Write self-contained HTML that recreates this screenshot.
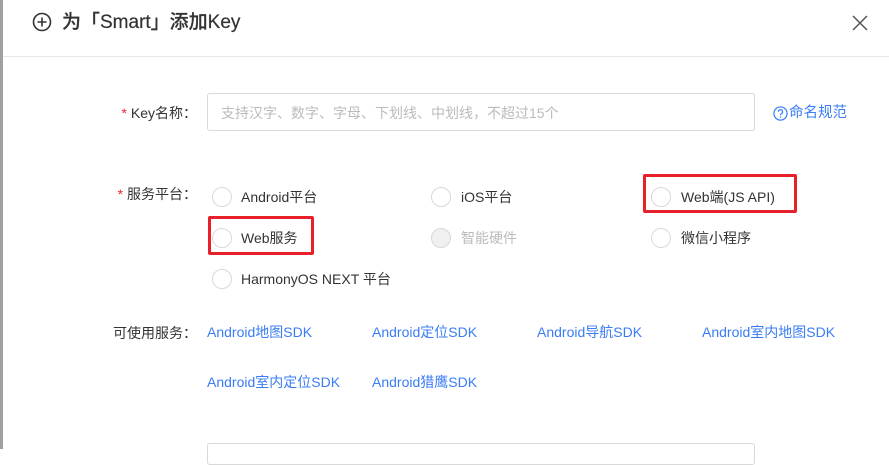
<!DOCTYPE html>
<html><head><meta charset="utf-8"><style>
body{margin:0;width:889px;height:449px;overflow:hidden;background:#fff;position:relative;font-family:"Liberation Sans","Noto Sans CJK SC",sans-serif;color:#333}
.a{position:absolute;white-space:nowrap}
.r{position:absolute;width:18px;height:18px;border:1px solid #d9d9d9;border-radius:50%;background:#fff}
.t{position:absolute;font-size:14px;color:#333;line-height:20px;white-space:nowrap}
.lb{position:absolute;font-size:14px;color:#333;line-height:20px;white-space:nowrap;right:692px;text-align:right}
.l{position:absolute;font-size:14px;color:#3a7cf5;line-height:20px;white-space:nowrap}
.box{position:absolute;border:3px solid #e8202a;border-radius:2px}
</style></head><body>
<div class="a" style="left:0;top:0;width:3px;height:449px;background:#a0a0a0"></div>
<svg class="a" style="left:32px;top:12px" width="20" height="20" viewBox="0 0 20 20"><circle cx="10" cy="10" r="8.5" fill="none" stroke="#333" stroke-width="1.6"/><path d="M10 5.5v9M5.5 10h9" stroke="#333" stroke-width="1.6"/></svg>
<div class="a" style="left:62px;top:10px;font-size:19px;line-height:26px;color:#333;font-weight:500;-webkit-text-stroke:0.2px #333">为「Smart」添加Key</div>
<svg class="a" style="left:852px;top:15px" width="16" height="16" viewBox="0 0 16 16"><path d="M1 1L15 15M15 1L1 15" stroke="#555" stroke-width="1.5"/></svg>
<div class="a" style="left:3px;top:56px;width:886px;height:1px;background:#e8e8e8"></div>

<div class="lb" style="top:103px"><span style="color:#f5222d">*</span> Key名称：</div>
<div class="a" style="left:207px;top:93px;width:546px;height:36px;border:1px solid #d9d9d9;border-radius:3px"></div>
<div class="t" style="left:221px;top:103px;color:#bbb">支持汉字、数字、字母、下划线、中划线，不超过15个</div>
<svg class="a" style="left:773px;top:106px" width="15" height="15" viewBox="0 0 16 16"><circle cx="8" cy="8" r="7" fill="none" stroke="#3a7cf5" stroke-width="1.3"/><path d="M5.8 6.2a2.2 2.2 0 1 1 2.9 2.1c-.5.2-.7.5-.7 1v.6" fill="none" stroke="#3a7cf5" stroke-width="1.3"/><circle cx="8" cy="11.8" r=".8" fill="#3a7cf5"/></svg>
<div class="l" style="left:789px;top:103px;font-size:14.5px">命名规范</div>

<div class="lb" style="top:184px"><span style="color:#f5222d">*</span> 服务平台：</div>
<div class="r" style="left:212px;top:187px"></div><div class="t" style="left:241px;top:187px">Android平台</div>
<div class="r" style="left:431px;top:187px"></div><div class="t" style="left:461px;top:187px">iOS平台</div>
<div class="r" style="left:651px;top:187px"></div><div class="t" style="left:681px;top:187px">Web端(JS API)</div>
<div class="r" style="left:212px;top:228px"></div><div class="t" style="left:241px;top:228px">Web服务</div>
<div class="r" style="left:431px;top:228px;background:#f0f0f0"></div><div class="t" style="left:461px;top:228px;color:#bbb">智能硬件</div>
<div class="r" style="left:651px;top:228px"></div><div class="t" style="left:681px;top:228px">微信小程序</div>
<div class="r" style="left:212px;top:269px"></div><div class="t" style="left:241px;top:269px">HarmonyOS NEXT 平台</div>
<div class="box" style="left:643px;top:174px;width:148px;height:33px"></div>
<div class="box" style="left:208px;top:216px;width:100px;height:33px"></div>

<div class="lb" style="top:323px">可使用服务：</div>
<div class="l" style="left:207px;top:322px">Android地图SDK</div>
<div class="l" style="left:372px;top:322px">Android定位SDK</div>
<div class="l" style="left:537px;top:322px">Android导航SDK</div>
<div class="l" style="left:702px;top:322px">Android室内地图SDK</div>
<div class="l" style="left:207px;top:372px">Android室内定位SDK</div>
<div class="l" style="left:372px;top:372px">Android猎鹰SDK</div>
<div class="a" style="left:207px;top:443px;width:546px;height:20px;border:1px solid #d9d9d9;border-radius:3px"></div>
</body></html>
